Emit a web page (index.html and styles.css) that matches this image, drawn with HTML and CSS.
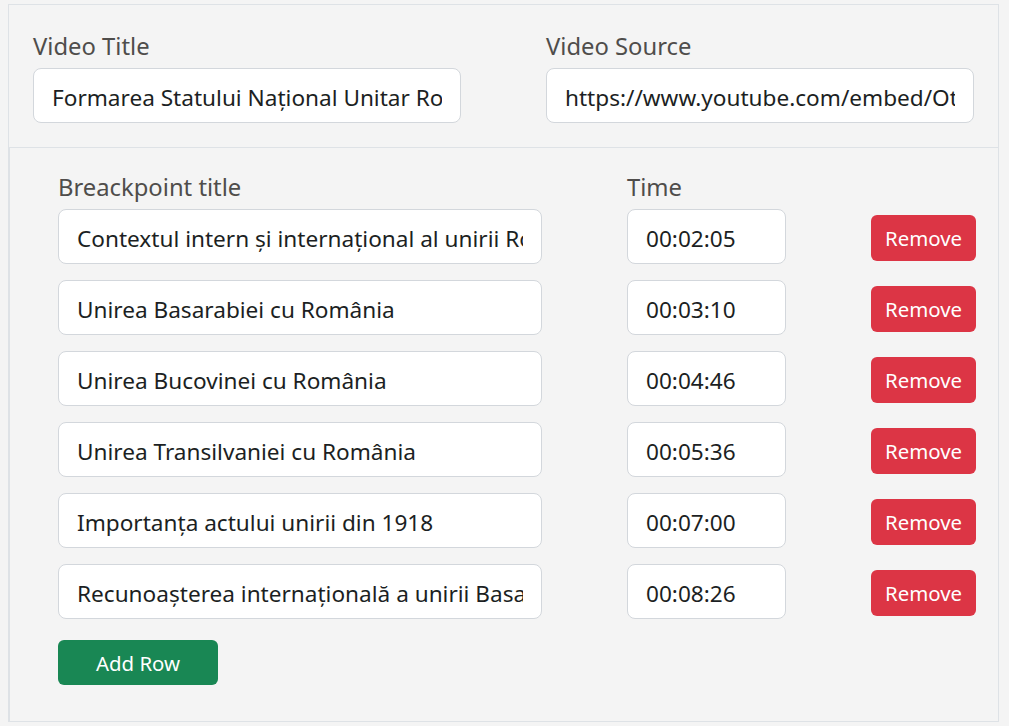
FILE: index.html
```html
<!DOCTYPE html>
<html lang="ro">
<head>
<meta charset="utf-8">
<title>Video breakpoints</title>
<link rel="stylesheet" href="styles.css">
</head>
<body>
<div class="panel">
  <div class="video-fields">
    <div class="field">
      <label class="lbl" for="vt">Video Title</label>
      <input class="ctl" id="vt" type="text" value="Formarea Statului Național Unitar Român">
    </div>
    <div class="field">
      <label class="lbl" for="vs">Video Source</label>
      <input class="ctl" id="vs" type="text" value="https://www.youtube.com/embed/OtNqYmC8c3w">
    </div>
  </div>
  <div class="breakpoints">
    <div class="bp-head">
      <div class="lbl">Breackpoint title</div>
      <div class="lbl">Time</div>
      <div></div>
    </div>
    <div class="bp-row">
      <input class="ctl" type="text" value="Contextul intern și internațional al unirii României">
      <input class="ctl" type="text" value="00:02:05">
      <button class="btn remove">Remove</button>
    </div>
    <div class="bp-row">
      <input class="ctl" type="text" value="Unirea Basarabiei cu România">
      <input class="ctl" type="text" value="00:03:10">
      <button class="btn remove">Remove</button>
    </div>
    <div class="bp-row">
      <input class="ctl" type="text" value="Unirea Bucovinei cu România">
      <input class="ctl" type="text" value="00:04:46">
      <button class="btn remove">Remove</button>
    </div>
    <div class="bp-row">
      <input class="ctl" type="text" value="Unirea Transilvaniei cu România">
      <input class="ctl" type="text" value="00:05:36">
      <button class="btn remove">Remove</button>
    </div>
    <div class="bp-row">
      <input class="ctl" type="text" value="Importanța actului unirii din 1918">
      <input class="ctl" type="text" value="00:07:00">
      <button class="btn remove">Remove</button>
    </div>
    <div class="bp-row last">
      <input class="ctl" type="text" value="Recunoașterea internațională a unirii Basarabiei">
      <input class="ctl" type="text" value="00:08:26">
      <button class="btn remove">Remove</button>
    </div>
    <button class="btn add">Add Row</button>
  </div>
</div>
</body>
</html>
```

FILE: styles.css
```css
html, body {
  margin: 0;
  padding: 0;
  background: #f4f4f4;
  font-family: "Noto Sans", "Open Sans", sans-serif;
}

.panel {
  margin: 4px 10px 0 8px;
  border: 1px solid #dee2e6;
  border-bottom: none;
  background: #f4f4f4;
}

.video-fields {
  display: grid;
  grid-template-columns: 428px 428px;
  column-gap: 85px;
  padding: 24px 23px 24px 24px;
}

.field {
  display: flex;
  flex-direction: column;
}

.lbl {
  display: block;
  font-size: 23.8px;
  line-height: 32px;
  color: #4f4d4b;
  padding-top: 1px;
  margin-bottom: 6px;
}

.ctl {
  box-sizing: border-box;
  height: 55px;
  width: 100%;
  margin: 0;
  padding: 3px 18px 0;
  border: 1px solid #d3d7dc;
  border-radius: 8px;
  background: #fff;
  font-family: inherit;
  font-size: 22.6px;
  color: #1c1f23;
  outline: none;
}

.breakpoints {
  border-top: 1px solid #dee2e6;
  border-left: 1px solid #dee2e6;
  border-bottom: 1px solid #dee2e6;
  padding: 22px 0 36px 48px;
}

.bp-head,
.bp-row {
  display: grid;
  grid-template-columns: 484px 159px 105px;
  column-gap: 85px;
  align-items: center;
}

.bp-row {
  margin-bottom: 16px;
}

.bp-row.last {
  margin-bottom: 21px;
}

.btn {
  display: flex;
  align-items: center;
  justify-content: center;
  border: none;
  padding: 0;
  margin: 0;
  color: #fff;
  font-family: inherit;
  font-size: 20.4px;
  border-radius: 6px;
  cursor: pointer;
}

.remove {
  width: 105px;
  height: 46px;
  background: #dc3545;
  margin-top: 2px;
}

.add {
  width: 160px;
  height: 45px;
  background: #198754;
}
```
